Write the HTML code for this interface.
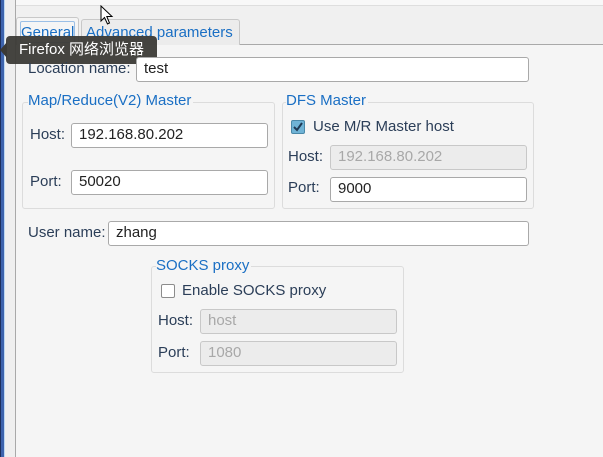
<!DOCTYPE html>
<html><head><meta charset="utf-8"><style>
*{box-sizing:border-box;margin:0;padding:0}
body{width:603px;height:457px;overflow:hidden;background:#f5f5f5;position:relative;font-family:"Liberation Sans","Noto Sans CJK SC",sans-serif;font-size:15px;color:#2b3e58}
.a{position:absolute}
.lbl{position:absolute;color:#2b3e58;white-space:nowrap;line-height:16px}
.in{position:absolute;background:#fff;border:1px solid #a9a9a9;border-radius:3px;color:#222;padding-left:7px;line-height:22px;font-size:15px}
.dis{background:#ececec;border-color:#c8c8c8;color:#a8a8a8}
.grp{position:absolute;border:1px solid #dcdcdc;border-radius:3px}
.gt{position:absolute;color:#1a6fc4;background:#f5f5f5;line-height:16px;padding-right:2px;white-space:nowrap}
.cb{position:absolute;width:14px;height:14px;border:1px solid #8c8c8c;border-radius:2px;background:#fff}
</style></head><body>
<div class="a" style="left:0;top:0;width:603px;height:5px;background:#f8f8f8"></div>
<div class="a" style="left:0;top:5px;width:603px;height:1px;background:#dedede"></div>
<div class="a" style="left:0;top:6px;width:603px;height:38px;background:#f0f0f0"></div>
<div class="a" style="left:15px;top:44px;width:588px;height:1px;background:#a9a9a9"></div>
<div class="a" style="left:0;top:0;width:1px;height:457px;background:#1d2f5e"></div>
<div class="a" style="left:1px;top:0;width:3px;height:457px;background:#3d63ad"></div>
<div class="a" style="left:4px;top:0;width:1px;height:457px;background:#bcd8f2"></div>
<div class="a" style="left:5px;top:0;width:10px;height:457px;background:#efefef"></div>
<div class="a" style="left:15px;top:0;width:1px;height:457px;background:#a9a9a9"></div>
<!-- tabs -->
<div class="a" style="left:16px;top:17px;width:63px;height:28px;border:1px solid #c8c8c8;border-bottom:none;border-radius:3px 3px 0 0;background:#f5f5f5"></div>
<div class="a" style="left:20px;top:21px;width:55px;height:22px;border:1px solid #9bbfe6;border-radius:2px"></div>
<div class="lbl" style="left:21px;top:25px;color:#1a6fc4">General</div>
<div class="a" style="left:81px;top:19px;width:159px;height:26px;border:1px solid #c8c8c8;border-bottom:none;border-radius:3px 3px 0 0;background:#ececec"></div>
<div class="lbl" style="left:86px;top:25px;color:#1a6fc4">Advanced parameters</div>
<!-- tooltip -->
<div class="a" style="left:6px;top:36px;width:151px;height:28px;background:#3b3a36;border-radius:4px;opacity:.95"></div>
<div class="a" style="left:0;top:42px;width:0;height:0;border-top:8px solid transparent;border-bottom:8px solid transparent;border-right:7px solid #3b3a36"></div>
<div class="lbl" style="left:19px;top:42px;color:#fff">Firefox 网络浏览器</div>
<!-- cursor -->
<svg class="a" style="left:100px;top:5px" width="14" height="20" viewBox="0 0 14 20"><path d="M1 1 L1 16 L4.5 12.5 L7.5 19 L9.5 18 L6.8 11.5 L12 11.5 Z" fill="#fff" stroke="#000" stroke-width="1"/></svg>
<!-- location -->
<div class="lbl" style="left:28px;top:61px">Location name:</div>
<div class="in" style="left:136px;top:57px;width:393px;height:25px">test</div>
<!-- MR group -->
<div class="grp" style="left:22px;top:102px;width:253px;height:107px"></div>
<div class="gt" style="left:28px;top:93px">Map/Reduce(V2) Master</div>
<div class="lbl" style="left:30px;top:127px">Host:</div>
<div class="in" style="left:71px;top:123px;width:197px;height:25px">192.168.80.202</div>
<div class="lbl" style="left:30px;top:174px">Port:</div>
<div class="in" style="left:71px;top:170px;width:197px;height:25px">50020</div>
<!-- DFS group -->
<div class="grp" style="left:282px;top:102px;width:252px;height:107px"></div>
<div class="gt" style="left:286px;top:93px">DFS Master</div>
<div class="cb" style="left:291px;top:120px;background:#6fb3d6;border-color:#4a88a8"></div>
<svg class="a" style="left:291px;top:120px" width="14" height="14"><path d="M3 7 L6 10 L11 3" fill="none" stroke="#1f3a55" stroke-width="2"/></svg>
<div class="lbl" style="left:313px;top:119px">Use M/R Master host</div>
<div class="lbl" style="left:288px;top:149px">Host:</div>
<div class="in dis" style="left:330px;top:145px;width:197px;height:25px">192.168.80.202</div>
<div class="lbl" style="left:288px;top:180px">Port:</div>
<div class="in" style="left:330px;top:177px;width:197px;height:25px">9000</div>
<!-- user -->
<div class="lbl" style="left:28px;top:225px">User name:</div>
<div class="in" style="left:108px;top:221px;width:421px;height:25px">zhang</div>
<!-- SOCKS -->
<div class="grp" style="left:151px;top:266px;width:253px;height:107px"></div>
<div class="gt" style="left:156px;top:258px">SOCKS proxy</div>
<div class="cb" style="left:161px;top:284px"></div>
<div class="lbl" style="left:182px;top:283px">Enable SOCKS proxy</div>
<div class="lbl" style="left:158px;top:313px">Host:</div>
<div class="in dis" style="left:200px;top:309px;width:197px;height:25px">host</div>
<div class="lbl" style="left:158px;top:345px">Port:</div>
<div class="in dis" style="left:200px;top:341px;width:197px;height:25px">1080</div>
</body></html>
